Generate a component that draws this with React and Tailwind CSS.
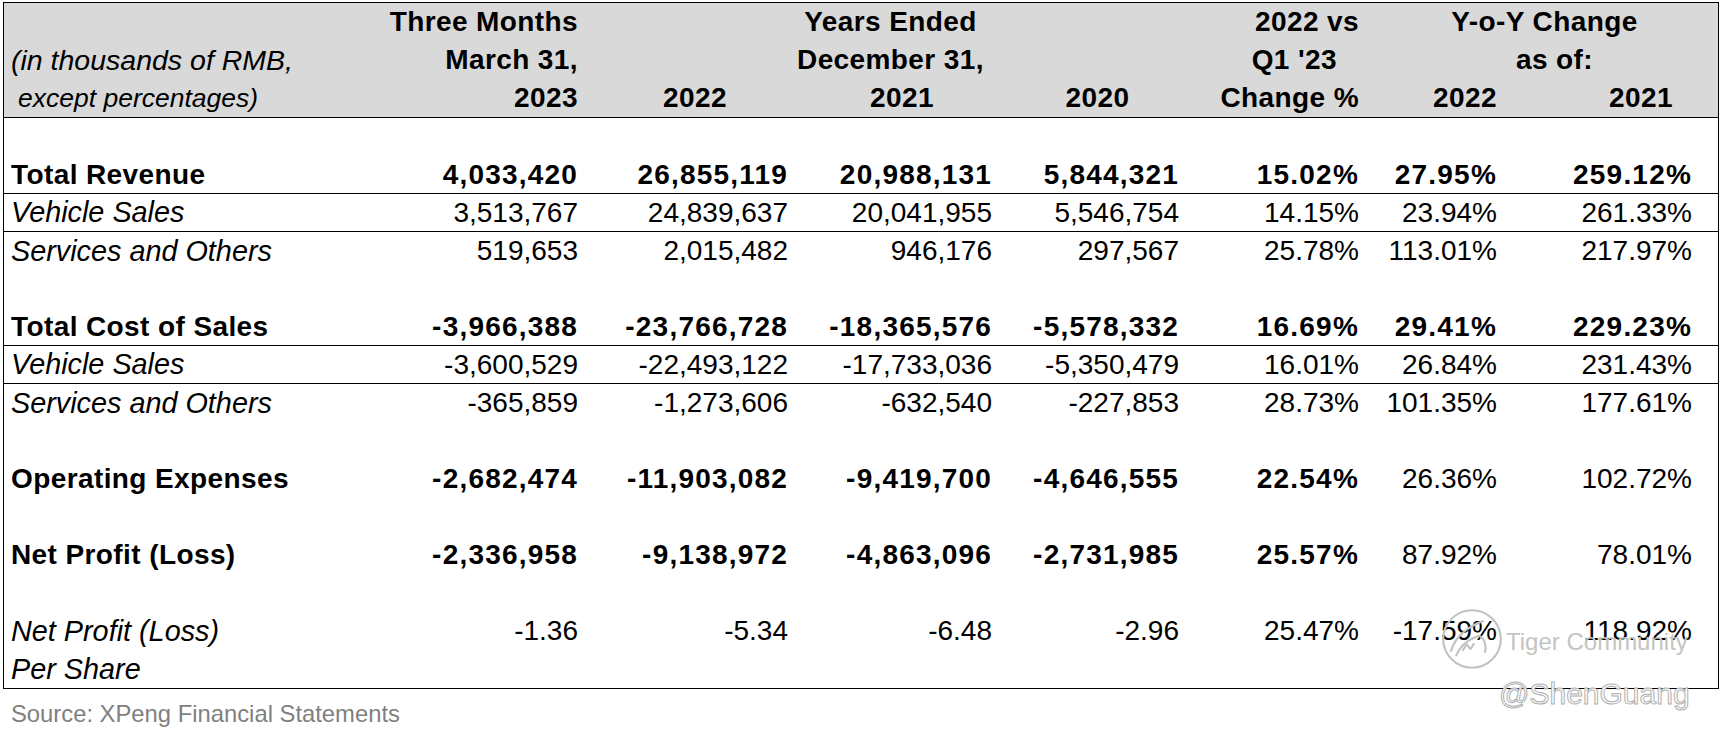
import React from 'react'

const cols = 'grid grid-cols-[416px_170px_210px_204px_187px_180px_151px_196px]'
const pads = ['pr-[12px]', 'pr-[12px]', 'pr-[12px]', 'pr-[12px]', 'pr-[12px]', 'pr-[25px]', 'pr-[26px]']

const rows = [
  { spacer: true },
  { label: 'Total Revenue', bold: 7, line: true, vals: ['4,033,420', '26,855,119', '20,988,131', '5,844,321', '15.02%', '27.95%', '259.12%'] },
  { label: 'Vehicle Sales', italic: true, line: true, vals: ['3,513,767', '24,839,637', '20,041,955', '5,546,754', '14.15%', '23.94%', '261.33%'] },
  { label: 'Services and Others', italic: true, vals: ['519,653', '2,015,482', '946,176', '297,567', '25.78%', '113.01%', '217.97%'] },
  { spacer: true },
  { label: 'Total Cost of Sales', bold: 7, line: true, vals: ['-3,966,388', '-23,766,728', '-18,365,576', '-5,578,332', '16.69%', '29.41%', '229.23%'] },
  { label: 'Vehicle Sales', italic: true, line: true, vals: ['-3,600,529', '-22,493,122', '-17,733,036', '-5,350,479', '16.01%', '26.84%', '231.43%'] },
  { label: 'Services and Others', italic: true, vals: ['-365,859', '-1,273,606', '-632,540', '-227,853', '28.73%', '101.35%', '177.61%'] },
  { spacer: true },
  { label: 'Operating Expenses', bold: 5, vals: ['-2,682,474', '-11,903,082', '-9,419,700', '-4,646,555', '22.54%', '26.36%', '102.72%'] },
  { spacer: true },
  { label: 'Net Profit (Loss)', bold: 5, vals: ['-2,336,958', '-9,138,972', '-4,863,096', '-2,731,985', '25.57%', '87.92%', '78.01%'] },
  { spacer: true },
  { label: 'Net Profit (Loss)', sub: 'Per Share', italic: true, vals: ['-1.36', '-5.34', '-6.48', '-2.96', '25.47%', '-17.59%', '118.92%'] },
]

function Row({ r }) {
  if (r.spacer) return <div className="h-[38px]" />
  const labelCls = r.italic ? 'italic font-normal text-[28.8px]' : 'font-bold tracking-[0.4px]'
  return (
    <div className={`${cols} ${r.line ? 'border-b border-black h-[38px]' : 'h-[38px]'}`}>
      <div className={`pl-[7px] flex items-center whitespace-nowrap ${labelCls}`}>{r.label}</div>
      {r.vals.map((v, i) => (
        <div key={i} className={`flex items-center justify-end whitespace-nowrap ${pads[i]} ${i < (r.bold || 0) ? 'font-bold tracking-[1.2px]' : 'font-normal'}`}>
          {v}
        </div>
      ))}
    </div>
  )
}

function TigerMark() {
  return (
    <svg width="64" height="64" viewBox="0 0 60 60" fill="none" stroke="#c2c2c2" strokeWidth="2">
      <circle cx="30" cy="30" r="27" />
      <path d="M10 42 C14 28 25 19 41 13" />
      <path d="M15 46 C19 36 27 30 37 27 C42 30 44 37 42 43" />
      <path d="M21 41 l4 -6 l4 5 M29 39 l3 -5" />
    </svg>
  )
}

export default function App() {
  return (
    <div className="relative w-[1723px] h-[733px] bg-white text-black font-['Liberation_Sans',Arial,sans-serif] text-[28px] leading-none overflow-hidden">
      <div className="ml-[3px] mt-[2px] w-[1716px] border border-black">
        {/* header block */}
        <div className="bg-[#d9d9d9] border-b border-black font-bold tracking-[0.4px] whitespace-nowrap">
          <div className={`${cols} h-[38px]`}>
            <div />
            <div className="flex items-center justify-end pr-[12px]">Three Months</div>
            <div className="col-span-3 flex items-center justify-center">Years Ended</div>
            <div className="flex items-center justify-end pr-[12px]">2022 vs</div>
            <div className="col-span-2 flex items-center justify-center">Y-o-Y Change</div>
          </div>
          <div className={`${cols} h-[38px]`}>
            <div className="pl-[7px] flex items-center italic font-normal tracking-normal text-[28.5px]">(in thousands of RMB,</div>
            <div className="flex items-center justify-end pr-[12px]">March 31,</div>
            <div className="col-span-3 flex items-center justify-center">December 31,</div>
            <div className="flex items-center justify-end pr-[34px]">Q1 '23</div>
            <div className="col-span-2 flex items-center justify-center pl-[20px]">as of:</div>
          </div>
          <div className={`${cols} h-[38px]`}>
            <div className="pl-[14px] flex items-center italic font-normal tracking-normal text-[26.5px]">except percentages)</div>
            <div className="flex items-center justify-end pr-[12px]">2023</div>
            <div className="flex items-center justify-center">2022</div>
            <div className="flex items-center justify-center">2021</div>
            <div className="flex items-center justify-center">2020</div>
            <div className="flex items-center justify-end pr-[12px]">Change %</div>
            <div className="flex items-center justify-end pr-[25px]">2022</div>
            <div className="flex items-center justify-end pr-[45px]">2021</div>
          </div>
        </div>

        {rows.slice(0, -1).map((r, i) => <Row key={i} r={r} />)}

        {/* per-share row spans two lines */}
        <div className={cols}>
          <div className="pl-[7px] italic text-[28.8px]">
            <div className="h-[38px] flex items-center">Net Profit (Loss)</div>
            <div className="h-[38px] flex items-center">Per Share</div>
          </div>
          {rows[rows.length - 1].vals.map((v, i) => (
            <div key={i} className={`h-[38px] flex items-center justify-end ${pads[i]}`}>{v}</div>
          ))}
        </div>
      </div>

      <div className="pl-[11px] pt-[13px] text-[23.8px] text-[#7f7f7f]">Source: XPeng Financial Statements</div>

      {/* watermark */}
      <div className="absolute left-[1440px] top-[607px] flex items-center gap-[2px] pointer-events-none">
        <TigerMark />
        <span className="text-[24px] text-[#c4c4c4] mt-[6px]">Tiger Community</span>
      </div>
      <div className="absolute left-[1499px] top-[679px] text-[30px] text-white [-webkit-text-stroke:1px_#b0b0b0] pointer-events-none">
        @ShenGuang
      </div>
    </div>
  )
}
